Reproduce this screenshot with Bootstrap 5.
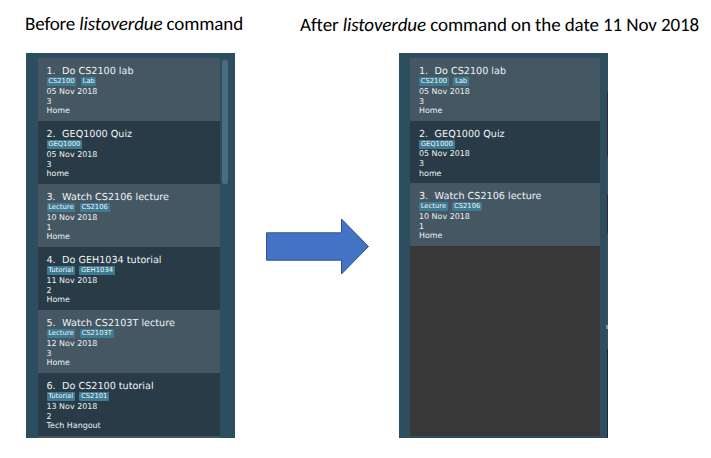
<!DOCTYPE html>
<html lang="en">
<head>
<meta charset="utf-8">
<meta name="viewport" content="width=device-width, initial-scale=1">
<title>listoverdue command</title>
<link href="https://cdn.jsdelivr.net/npm/bootstrap@5.3.0/dist/css/bootstrap.min.css" rel="stylesheet">
<style>
body{width:711px;height:458px;font-family:"DejaVu Sans",sans-serif;background:#fff;color:#f0f3f4;text-rendering:geometricPrecision}
.page{padding-left:26px}
.side{width:209px}
.arrow-col{width:164px;padding:165px 0 0 30px}
.heading{font-family:Carlito,Calibri,Lato,sans-serif;font-size:19px;line-height:24px;color:#000;height:40px;margin-top:13px}
.heading-before{margin-left:-1px;letter-spacing:-.12px}
.heading-after{margin-left:-99px;letter-spacing:-.1px;margin-top:14px;height:39px}
.panel{height:385px;background:#2d4d61;padding:5px 15px 0 11.5px}
.panel-after{padding:5px 8px 2px 11px}
.task{height:63px;flex:none;padding:8px 0 0 9px;background:#455763}
.task:nth-child(even){background:#293b47}
.panel-after .task{height:62.5px}
.rest{background:#383838}
.task-title{font-size:9.65px;line-height:11.3px}
.task-no{width:15.6px}
.tags{height:9.7px;gap:4.5px}
.tag{background:#3d7b93;border-radius:1px;font-size:6.8px;line-height:9px;height:9px;padding:0 1.7px}
.line{font-size:7.95px;line-height:9.6px}
.scroll-thumb{width:6px;height:124px;top:7px;right:7px;background:#4a6b81;border-radius:2px}
.edge{width:1px;background:linear-gradient(#3d484e 0 39px,#262c30 39px 103px,#424c51 103px 142px,#262c30 142px 180px,#424c51 180px 296px,#20272b 296px)}
.edge-mark{width:2px;height:4px;right:0;top:272px;background:#8295a0}
</style>
</head>
<body class="overflow-hidden">
<main class="page d-flex">
  <section class="side flex-shrink-0">
    <h1 class="heading heading-before mb-0 fw-normal text-nowrap">Before <em>listoverdue</em> command</h1>
    <div class="panel position-relative">
      <div class="d-flex flex-column h-100 overflow-hidden" id="before"></div>
      <div class="scroll-thumb position-absolute"></div>
    </div>
  </section>
  <div class="arrow-col flex-shrink-0">
    <div class="pt-5"><svg class="d-block" width="106" height="62" viewBox="0 0 106 62"><path d="M1.5 19.8H76.5V6L103.5 33.5 76.5 61V47.2H1.5Z" fill="#4472c4" stroke="#2f528f"/></svg></div>
  </div>
  <section class="side flex-shrink-0">
    <h1 class="heading heading-after mb-0 fw-normal text-nowrap">After <em>listoverdue</em> command on the date 11 Nov 2018</h1>
    <div class="panel panel-after position-relative">
      <div class="rest d-flex flex-column h-100 overflow-hidden" id="after"></div>
      <div class="edge position-absolute top-0 bottom-0 end-0"></div>
      <div class="edge-mark position-absolute"></div>
    </div>
  </section>
</main>
<script src="https://cdn.jsdelivr.net/npm/bootstrap@5.3.0/dist/js/bootstrap.bundle.min.js"></script>
<script>
const tasks = [
  ['Do CS2100 lab', ['CS2100','Lab'], '05 Nov 2018', '3', 'Home'],
  ['GEQ1000 Quiz', ['GEQ1000'], '05 Nov 2018', '3', 'home'],
  ['Watch CS2106 lecture', ['Lecture','CS2106'], '10 Nov 2018', '1', 'Home'],
  ['Do GEH1034 tutorial', ['Tutorial','GEH1034'], '11 Nov 2018', '2', 'Home'],
  ['Watch CS2103T lecture', ['Lecture','CS2103T'], '12 Nov 2018', '3', 'Home'],
  ['Do CS2100 tutorial', ['Tutorial','CS2101'], '13 Nov 2018', '2', 'Tech Hangout']
];
const card = ([name, tags, ...lines], i) => `<article class="task">
  <div class="task-title d-flex text-nowrap"><span class="task-no">${i + 1}.</span><span>${name}</span></div>
  <div class="tags d-flex">${tags.map(t => `<span class="tag">${t}</span>`).join('')}</div>
  ${lines.map(l => `<div class="line">${l}</div>`).join('')}
</article>`;
document.getElementById('before').innerHTML = tasks.map(card).join('') + '<article class="task"></article>';
document.getElementById('after').innerHTML = tasks.slice(0, 3).map(card).join('');
</script>
</body>
</html>
